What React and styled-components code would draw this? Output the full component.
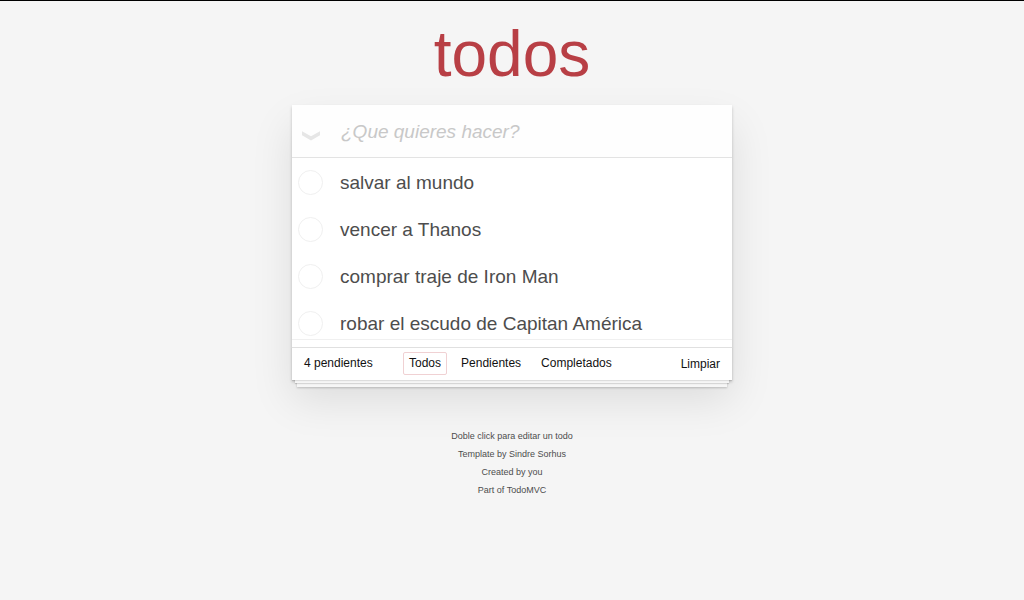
import React, { useState } from "react";
import styled, { createGlobalStyle } from "styled-components";

const GlobalStyle = createGlobalStyle`
  * { box-sizing: border-box; }
  body {
    margin: 0;
    background: #f5f5f5;
    color: #4d4d4d;
    font-family: "Liberation Sans", Arial, sans-serif;
    font-size: 12px;
    -webkit-font-smoothing: antialiased;
  }
  button, input { font: inherit; color: inherit; }
`;

const Page = styled.div`
  min-height: 100vh;
  border-top: 1px solid #000;
  padding: 17px 16px 0;
`;

const Column = styled.div`
  max-width: 440px;
  margin: 0 auto;
`;

const Title = styled.h1`
  margin: 0 0 15px;
  color: #b83f45;
  font-size: 64px;
  line-height: 72px;
  font-weight: 400;
  text-align: center;
`;

const Card = styled.section`
  background: #fff;
  box-shadow: 0 2px 3px rgba(0, 0, 0, 0.2), 0 20px 40px rgba(0, 0, 0, 0.1);
`;

const EntryRow = styled.form`
  display: flex;
  align-items: center;
  height: 53px;
  background: #fefefe;
  border-bottom: 1px solid #e3e3e3;
`;

const ToggleAll = styled.button`
  width: 38px;
  height: 52px;
  padding: 9px 0 0;
  border: 0;
  background: none;
  display: flex;
  align-items: center;
  justify-content: center;
`;

const Entry = styled.input`
  flex: 1;
  min-width: 0;
  padding: 2px 11px 0;
  border: 0;
  outline: 0;
  background: transparent;
  font-size: 19px;
  line-height: 24px;
  &::placeholder { color: #c8c8c8; font-style: italic; opacity: 1; }
`;

const List = styled.ul`
  list-style: none;
  margin: 0 0 7px;
  padding: 8px 0 0;
  display: flex;
  flex-direction: column;
  gap: 15px;
  border-bottom: 1px solid #f0f0f0;
`;

const Item = styled.li`
  display: flex;
  align-items: center;
  height: 32px;
  padding-left: 6px;
`;

const Check = styled.input`
  appearance: none;
  flex: none;
  width: 25px;
  height: 25px;
  margin: 0;
  border: 1px solid #f0f0f0;
  border-radius: 50%;
  background: #fff;
  &:checked { border-color: #5dc2af; }
`;

const ItemLabel = styled.label`
  flex: 1;
  padding: 1px 0 0 17px;
  font-size: 19px;
  line-height: 24px;
  color: ${(p) => (p.$done ? "#cdcdcd" : "#4d4d4d")};
  text-decoration: ${(p) => (p.$done ? "line-through" : "none")};
`;

const Footer = styled.footer`
  display: flex;
  align-items: center;
  height: 33px;
  padding: 0 12px 2px;
  border-top: 1px solid #e0e0e0;
  color: #111;
  box-shadow: 0 1px 1px rgba(0, 0, 0, 0.1), 0 6px 0 -3px #f6f6f6,
    0 7px 1px -3px rgba(0, 0, 0, 0.13), 0 12px 0 -5px #f6f6f6,
    0 13px 2px -5px rgba(0, 0, 0, 0.2);
`;

const Count = styled.span`
  width: 99px;
  line-height: 16px;
`;

const Filters = styled.nav`
  display: flex;
  gap: 8px;
`;

const Filter = styled.a`
  padding: 3px 5px;
  border: 1px solid ${(p) => (p.$active ? "#f0d1d3" : "transparent")};
  border-radius: 2px;
  line-height: 15px;
  color: inherit;
  text-decoration: none;
`;

const Clear = styled.button`
  margin-left: auto;
  padding: 2px 0 0;
  border: 0;
  background: none;
  line-height: 16px;
`;

const Info = styled.footer`
  padding-top: 48px;
  display: flex;
  flex-direction: column;
  gap: 2px;
  color: #4d4d4d;
  font-size: 9px;
  line-height: 16px;
  text-align: center;
  p { margin: 0; }
`;

const FILTERS = ["Todos", "Pendientes", "Completados"];

export default function App() {
  const [todos, setTodos] = useState([
    { text: "salvar al mundo", done: false },
    { text: "vencer a Thanos", done: false },
    { text: "comprar traje de Iron Man", done: false },
    { text: "robar el escudo de Capitan América", done: false },
  ]);
  const [filter, setFilter] = useState("Todos");
  const [draft, setDraft] = useState("");

  const pending = todos.filter((t) => !t.done).length;
  const shown = todos.filter(
    (t) => filter === "Todos" || t.done === (filter === "Completados")
  );

  const add = (e) => {
    e.preventDefault();
    if (!draft.trim()) return;
    setTodos([...todos, { text: draft.trim(), done: false }]);
    setDraft("");
  };
  const toggle = (todo) =>
    setTodos(todos.map((t) => (t === todo ? { ...t, done: !t.done } : t)));

  return (
    <Page>
      <GlobalStyle />
      <Column>
        <Title>todos</Title>
        <Card>
          <EntryRow onSubmit={add}>
            <ToggleAll
              type="button"
              aria-label="Marcar todos"
              onClick={() => setTodos(todos.map((t) => ({ ...t, done: pending > 0 })))}
            >
              <svg width="18" height="10" viewBox="0 0 18 10" aria-hidden="true">
                <path d="M0 0.3 L9 5.2 L18 0.3 V4.3 L9 9.6 L0 4.3 Z" fill="#e6e6e6" />
              </svg>
            </ToggleAll>
            <Entry
              aria-label="¿Que quieres hacer?"
              placeholder="¿Que quieres hacer?"
              value={draft}
              onChange={(e) => setDraft(e.target.value)}
            />
          </EntryRow>
          <List>
            {shown.map((t, i) => (
              <Item key={t.text + i}>
                <Check
                  type="checkbox"
                  id={`todo-${i}`}
                  checked={t.done}
                  onChange={() => toggle(t)}
                />
                <ItemLabel htmlFor={`todo-${i}`} $done={t.done}>{t.text}</ItemLabel>
              </Item>
            ))}
          </List>
          <Footer>
            <Count>{`${pending} pendientes`}</Count>
            <Filters>
              {FILTERS.map((f) => (
                <Filter key={f} href="#" $active={f === filter} onClick={() => setFilter(f)}>
                  {f}
                </Filter>
              ))}
            </Filters>
            <Clear type="button" onClick={() => setTodos(todos.filter((t) => !t.done))}>
              Limpiar
            </Clear>
          </Footer>
        </Card>
        <Info>
          <p>Doble click para editar un todo</p>
          <p>Template by Sindre Sorhus</p>
          <p>Created by you</p>
          <p>Part of TodoMVC</p>
        </Info>
      </Column>
    </Page>
  );
}
